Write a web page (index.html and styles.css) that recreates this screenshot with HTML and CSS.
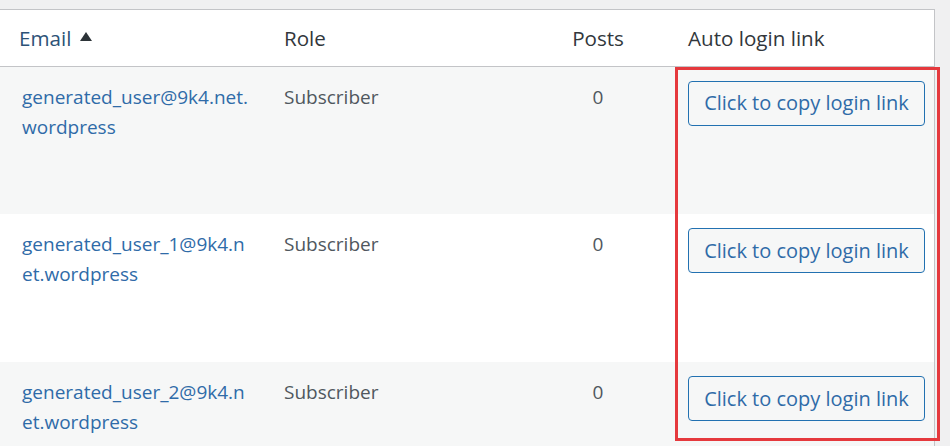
FILE: index.html
```html
<!DOCTYPE html>
<html>
<head>
<meta charset="utf-8">
<link rel="stylesheet" href="styles.css">
</head>
<body>
<div class="page">
  <div class="table-wrap">
    <table class="users">
      <colgroup>
        <col class="c-email"><col class="c-role"><col class="c-posts"><col class="c-link">
      </colgroup>
      <thead>
        <tr>
          <th class="th-email"><a href="#" class="sort-link">Email<span class="arrow"></span></a></th>
          <th>Role</th>
          <th class="num">Posts</th>
          <th>Auto login link</th>
        </tr>
      </thead>
      <tbody>
        <tr class="alt">
          <td class="email"><a href="#">generated_user@9k4.net.<br>wordpress</a></td>
          <td class="role">Subscriber</td>
          <td class="num">0</td>
          <td class="link"><button class="copy-btn">Click to copy login link</button></td>
        </tr>
        <tr>
          <td class="email"><a href="#">generated_user_1@9k4.n<br>et.wordpress</a></td>
          <td class="role">Subscriber</td>
          <td class="num">0</td>
          <td class="link"><button class="copy-btn">Click to copy login link</button></td>
        </tr>
        <tr class="alt">
          <td class="email"><a href="#">generated_user_2@9k4.n<br>et.wordpress</a></td>
          <td class="role">Subscriber</td>
          <td class="num">0</td>
          <td class="link"><button class="copy-btn">Click to copy login link</button></td>
        </tr>
      </tbody>
    </table>
  </div>
  <div class="highlight"></div>
</div>
</body>
</html>
```
FILE: styles.css
```css
html, body {
  margin: 0;
  padding: 0;
  background: #f0f0f1;
}
body {
  font-family: "Open Sans", "Noto Sans", sans-serif;
  font-size: 19px;
  color: #50575e;
  height: 446px;
  overflow: hidden;
}
.page {
  position: relative;
  width: 950px;
  height: 446px;
  padding-top: 9px;
  box-sizing: border-box;
}
.table-wrap {
  width: 935px;
  border-top: 1px solid #c3c4c7;
  border-right: 1px solid #c3c4c7;
  box-sizing: border-box;
  background: #fff;
}
.users {
  width: 934px;
  border-collapse: collapse;
  table-layout: fixed;
}
.c-email { width: 269px; }
.c-role { width: 254px; }
.c-posts { width: 150px; }
.c-link { width: 261px; }
thead th {
  height: 56px;
  box-sizing: border-box;
  text-align: left;
  font-weight: 400;
  font-size: 20.6px;
  color: #32373c;
  padding: 0 15px;
  border-bottom: 1px solid #c3c4c7;
  line-height: 30px;
  vertical-align: middle;
}
thead th.th-email { padding-left: 19px; }
.sort-link {
  color: #2d5277;
  text-decoration: none;
}
.arrow {
  display: inline-block;
  width: 0;
  height: 0;
  border-left: 6.5px solid transparent;
  border-right: 6.5px solid transparent;
  border-bottom: 9px solid #2c3338;
  margin-left: 9px;
  vertical-align: 5px;
}
th.num, td.num { text-align: center; }
tbody tr { height: 148px; }
tbody tr.alt { background: #f6f7f7; }
tbody td {
  vertical-align: top;
  padding: 15px 15px 0;
  line-height: 30px;
  box-sizing: border-box;
}
td.email { padding-left: 22px; padding-right: 10px; }
td.email a {
  color: #2f6ba8;
  text-decoration: none;
}
td.link { padding-top: 14px; }
.copy-btn {
  font-family: inherit;
  font-size: 20px;
  color: #2f6ba8;
  background: #f6f7f7;
  border: 1px solid #2271b1;
  border-radius: 4px;
  height: 45px;
  width: 237px;
  padding: 0;
  line-height: 30px;
  cursor: pointer;
}
.highlight {
  position: absolute;
  left: 675px;
  top: 67px;
  width: 265px;
  height: 374px;
  box-sizing: border-box;
  border: 3px solid #e5393d;
  pointer-events: none;
}
```
